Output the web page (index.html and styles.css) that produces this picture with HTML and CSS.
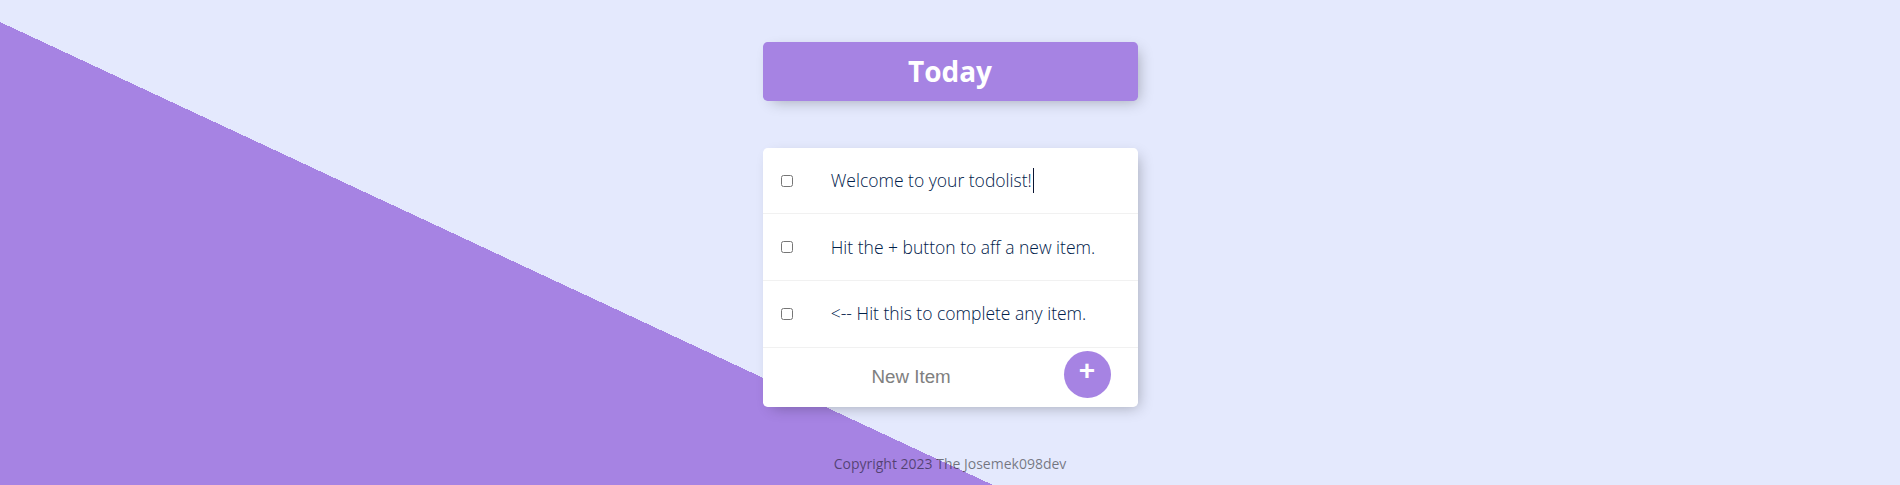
FILE: index.html
```html
<!DOCTYPE html>
<html lang="en">
<head>
<meta charset="utf-8">
<title>To Do List</title>
<link rel="stylesheet" href="styles.css">
</head>
<body>
<main class="page">
  <div class="box heading">
    <h1 class="title">Today</h1>
  </div>
  <div class="box list">
    <div class="item">
      <input class="check" type="checkbox">
      <p class="text">Welcome to your todolist!<span class="caret"></span></p>
    </div>
    <div class="item">
      <input class="check" type="checkbox">
      <p class="text">Hit the + button to aff a new item.</p>
    </div>
    <div class="item">
      <input class="check" type="checkbox">
      <p class="text">&lt;-- Hit this to complete any item.</p>
    </div>
    <form class="item add-form">
      <input class="new-item" type="text" name="newItem" placeholder="New Item" autocomplete="off">
      <button class="add-btn" type="submit">+</button>
    </form>
  </div>
  <footer class="footer">Copyright 2023 The Josemek098dev</footer>
</main>
</body>
</html>
```
FILE: styles.css
```css
html {
  background-color: #E4E9FD;
  background-image: linear-gradient(25deg, #A683E3 50%, #E4E9FD 50%);
  background-size: 100% 930px;
  background-repeat: no-repeat;
  font-family: "Open Sans", "Noto Sans", sans-serif;
}

body {
  margin: 0;
}

.page {
  padding-top: 42px;
}

.box {
  width: 375px;
  margin: 0 auto;
  background: #ffffff;
  border-radius: 4.7px;
  box-shadow: 4.7px 4.7px 14px -4.7px rgba(0, 0, 0, 0.3);
}

.heading {
  background-color: #A683E3;
  text-align: center;
}

.title {
  margin: 0;
  padding: 9.4px;
  height: 40px;
  font-size: 28px;
  line-height: 40px;
  font-weight: 700;
  color: #ffffff;
}

.list {
  margin-top: 47px;
}

.item {
  display: flex;
  align-items: center;
  min-height: 65.6px;
  border-bottom: 1px solid #F1F1F1;
}

.item:last-child {
  border-bottom: 0;
}

.check {
  width: 12px;
  height: 12px;
  margin: 0 18.75px;
  flex: none;
}

.text {
  margin: 0;
  padding: 18.75px;
  font-size: 17.5px;
  line-height: 25px;
  font-weight: 300;
  color: #00204a;
}

.caret {
  display: inline-block;
  width: 1px;
  height: 25px;
  margin-left: 1px;
  background: #0b1533;
  vertical-align: top;
}

.add-form {
  min-height: 59px;
  padding: 0 27px 0 18.75px;
}

.new-item {
  flex: none;
  width: 242px;
  min-width: 0;
  box-sizing: border-box;
  height: 56px;
  border: none;
  padding: 0 1px 0 18.75px;
  text-align: center;
  font-family: "Liberation Sans", Arial, sans-serif;
  font-size: 18.75px;
  color: #333;
  background: transparent;
}

.new-item::placeholder {
  color: grey;
  opacity: 1;
}

.new-item:focus {
  outline: none;
}

.add-btn {
  margin-left: auto;
  margin-bottom: 6px;
  width: 47px;
  height: 47px;
  border-radius: 50%;
  border: 0;
  padding: 0 0 5.6px;
  background-color: #A683E3;
  color: #ffffff;
  font-family: "Liberation Sans", Arial, sans-serif;
  font-size: 28px;
  font-weight: 700;
  line-height: 1;
}

.footer {
  margin-top: 47px;
  text-align: center;
  font-size: 14px;
  line-height: 20px;
  color: rgba(0, 0, 0, 0.5);
}
```
